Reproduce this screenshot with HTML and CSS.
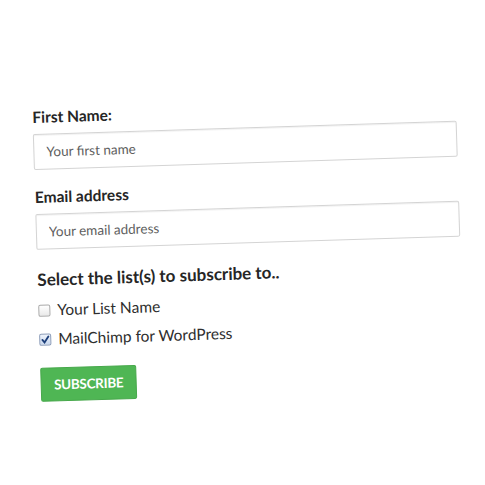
FILE: index.html
```html
<!DOCTYPE html>
<html lang="en">
<head>
    <meta charset="UTF-8">
    <meta name="viewport" content="width=device-width, initial-scale=1.0">
    <title>Newsletter Signup</title>
    <link rel="stylesheet" href="styles.css">
</head>
<body>
    <form class="signup" onsubmit="return false">
        <div class="field">
            <label for="fname">First Name:</label>
            <input type="text" id="fname" placeholder="Your first name">
        </div>

        <div class="field">
            <label for="email">Email address</label>
            <input type="email" id="email" placeholder="Your email address">
        </div>

        <div class="lists">
            <p class="lists-title">Select the list(s) to subscribe to..</p>
            <label class="check">
                <input type="checkbox">
                <span class="box"></span>
                Your List Name
            </label>
            <label class="check">
                <input type="checkbox" checked>
                <span class="box">
                    <svg viewBox="0 0 12 12"><path d="M2.5 6.2 L5 9.2 L9.8 2.2"/></svg>
                </span>
                MailChimp for WordPress
            </label>
        </div>

        <button type="submit" class="subscribe">Subscribe</button>
    </form>
</body>
</html>
```

FILE: styles.css
```css
body {
    margin: 0;
    padding: 0;
    background-color: #fff;
    font-family: Lato, "Open Sans", sans-serif;
    color: #333;
}

.signup {
    width: 424px;
    margin: 108px 0 0 32px;
    display: flex;
    flex-direction: column;
    transform: rotate(-1.8deg);
    transform-origin: 0 0;
}

.field {
    display: flex;
    flex-direction: column;
    margin-bottom: 18px;
}

.field label {
    font-size: 15.5px;
    font-weight: bold;
    color: #262626;
    line-height: 18px;
    margin-bottom: 8px;
}

.field input {
    height: 36px;
    box-sizing: border-box;
    border: 1px solid #d4d4d4;
    border-radius: 2px;
    box-shadow: inset 0 1px 1px rgba(0, 0, 0, 0.06);
    padding: 0 12px;
    font-family: Lato, sans-serif;
    font-size: 13.5px;
    color: #555;
}

.field input::placeholder {
    color: #5e5e5e;
}

.lists {
    display: flex;
    flex-direction: column;
    gap: 12px;
}

.lists-title {
    margin: 2px 0 0;
    font-size: 17px;
    font-weight: bold;
    color: #262626;
    line-height: 20px;
}

.check {
    display: flex;
    align-items: center;
    gap: 7px;
    font-size: 15.5px;
    color: #2e2e2e;
    line-height: 17px;
}

.check input {
    display: none;
}

.check .box {
    width: 10px;
    height: 10px;
    border: 1px solid #a9a9a9;
    border-radius: 2px;
    background: linear-gradient(#fff, #e9e9e9);
    display: flex;
}

.check input:checked + .box {
    background: linear-gradient(#eef3fb, #c9d8ee);
    border-color: #8a9bb8;
}

.check .box svg {
    width: 10px;
    height: 10px;
    fill: none;
    stroke: #1d3f7a;
    stroke-width: 2.2;
    stroke-linecap: round;
}

.subscribe {
    align-self: flex-start;
    margin: 20px 0 0 0;
    width: 96px;
    height: 34px;
    background-color: #4fb654;
    border: 1px solid #47a84b;
    border-radius: 2px;
    color: #fff;
    font-family: Lato, sans-serif;
    font-weight: bold;
    font-size: 13.5px;
    letter-spacing: -0.3px;
    text-transform: uppercase;
    cursor: pointer;
}
```
